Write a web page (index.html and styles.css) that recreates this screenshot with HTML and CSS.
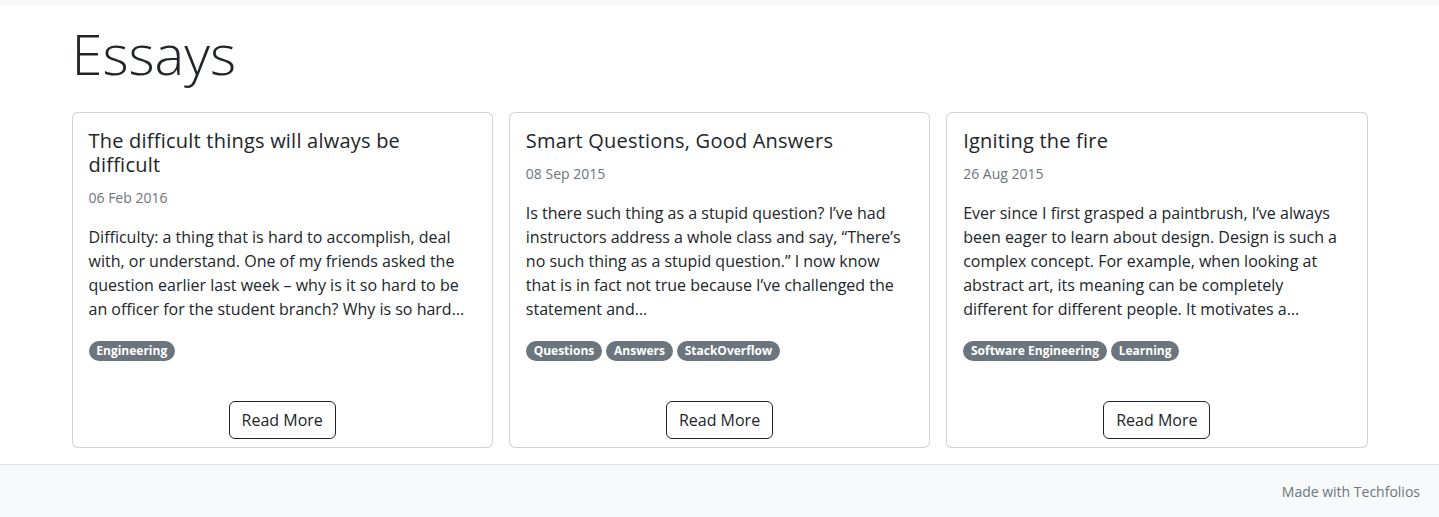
FILE: index.html
```html
<!DOCTYPE html>
<html lang="en">
<head>
<meta charset="utf-8">
<title>Essays</title>
<link rel="stylesheet" href="styles.css">
</head>
<body>
<div class="topbar"></div>
<main class="container">
  <h1 class="page-title">Essays</h1>
  <div class="cards">
    <div class="card">
      <div class="card-body">
        <h5 class="card-title">The difficult things will always be difficult</h5>
        <div class="card-date">06 Feb 2016</div>
        <p class="card-text">Difficulty: a thing that is hard to accomplish, deal with, or understand. One of my friends asked the question earlier last week – why is it so hard to be an officer for the student branch? Why is so hard…</p>
        <p class="tags">
          <span class="badge">Engineering</span>
        </p>
      </div>
      <div class="card-footer"><a class="btn" href="#">Read More</a></div>
    </div>
    <div class="card">
      <div class="card-body">
        <h5 class="card-title">Smart Questions, Good Answers</h5>
        <div class="card-date">08 Sep 2015</div>
        <p class="card-text">Is there such thing as a stupid question? I’ve had instructors address a whole class and say, “There’s no such thing as a stupid question.” I now know that is in fact not true because I’ve challenged the statement and…</p>
        <p class="tags">
          <span class="badge">Questions</span>
          <span class="badge">Answers</span>
          <span class="badge">StackOverflow</span>
        </p>
      </div>
      <div class="card-footer"><a class="btn" href="#">Read More</a></div>
    </div>
    <div class="card">
      <div class="card-body">
        <h5 class="card-title">Igniting the fire</h5>
        <div class="card-date">26 Aug 2015</div>
        <p class="card-text">Ever since I first grasped a paintbrush, I’ve always been eager to learn about design. Design is such a complex concept. For example, when looking at abstract art, its meaning can be completely different for different people. It motivates a…</p>
        <p class="tags">
          <span class="badge">Software Engineering</span>
          <span class="badge">Learning</span>
        </p>
      </div>
      <div class="card-footer"><a class="btn" href="#">Read More</a></div>
    </div>
  </div>
</main>
<footer class="site-footer">
  <span class="footer-text">Made with Techfolios</span>
</footer>
</body>
</html>
```
FILE: styles.css
```css
* { box-sizing: border-box; }
html, body { margin: 0; padding: 0; }
body {
  font-family: "Open Sans", "Liberation Sans", sans-serif;
  font-size: 16px;
  line-height: 1.5;
  color: #212529;
  background: #fff;
}
.topbar {
  height: 5px;
  background: #f8f9fa;
}
.container {
  max-width: 1320px;
  margin: 0 auto;
  padding: 0 12px;
}
.page-title {
  font-size: 56px;
  font-weight: 300;
  line-height: 1.2;
  margin: 15px 0 25px;
}
.cards {
  display: grid;
  grid-template-columns: repeat(3, 1fr);
  gap: 16px;
  margin-bottom: 16px;
}
.card {
  display: flex;
  flex-direction: column;
  border: 1px solid rgba(0,0,0,0.175);
  border-radius: 6px;
  background: #fff;
}
.card-body {
  padding: 16px;
}
.card-title {
  font-size: 20px;
  font-weight: 500;
  line-height: 1.2;
  letter-spacing: 0.22px;
  margin: 0 0 8px;
}
.card-date {
  font-size: 14px;
  line-height: 24px;
  padding-top: 1px;
  color: #6c757d;
  margin-bottom: 15px;
}
.card-text {
  margin: 0 0 16px;
}
.tags {
  margin: 0 0 16px;
  line-height: 24px;
}
.badge {
  display: inline-block;
  font-size: 12px;
  font-weight: 700;
  line-height: 1;
  padding: 4.2px 7.8px;
  color: #fff;
  background: #6c757d;
  border-radius: 50rem;
  vertical-align: baseline;
}
.card-footer {
  margin-top: auto;
  padding: 8px 16px;
  text-align: center;
}
.btn {
  display: inline-block;
  font-size: 16px;
  line-height: 24px;
  padding: 6px 12px;
  color: #212529;
  border: 1px solid #212529;
  border-radius: 6px;
  text-decoration: none;
}
.site-footer {
  border-top: 1px solid #dee2e6;
  background: #f8f9fa;
  padding: 16px 19px;
  font-size: 14px;
  line-height: 21px;
  text-align: right;
  min-height: 60px;
}
.footer-text {
  color: #6c757d;
}
```
